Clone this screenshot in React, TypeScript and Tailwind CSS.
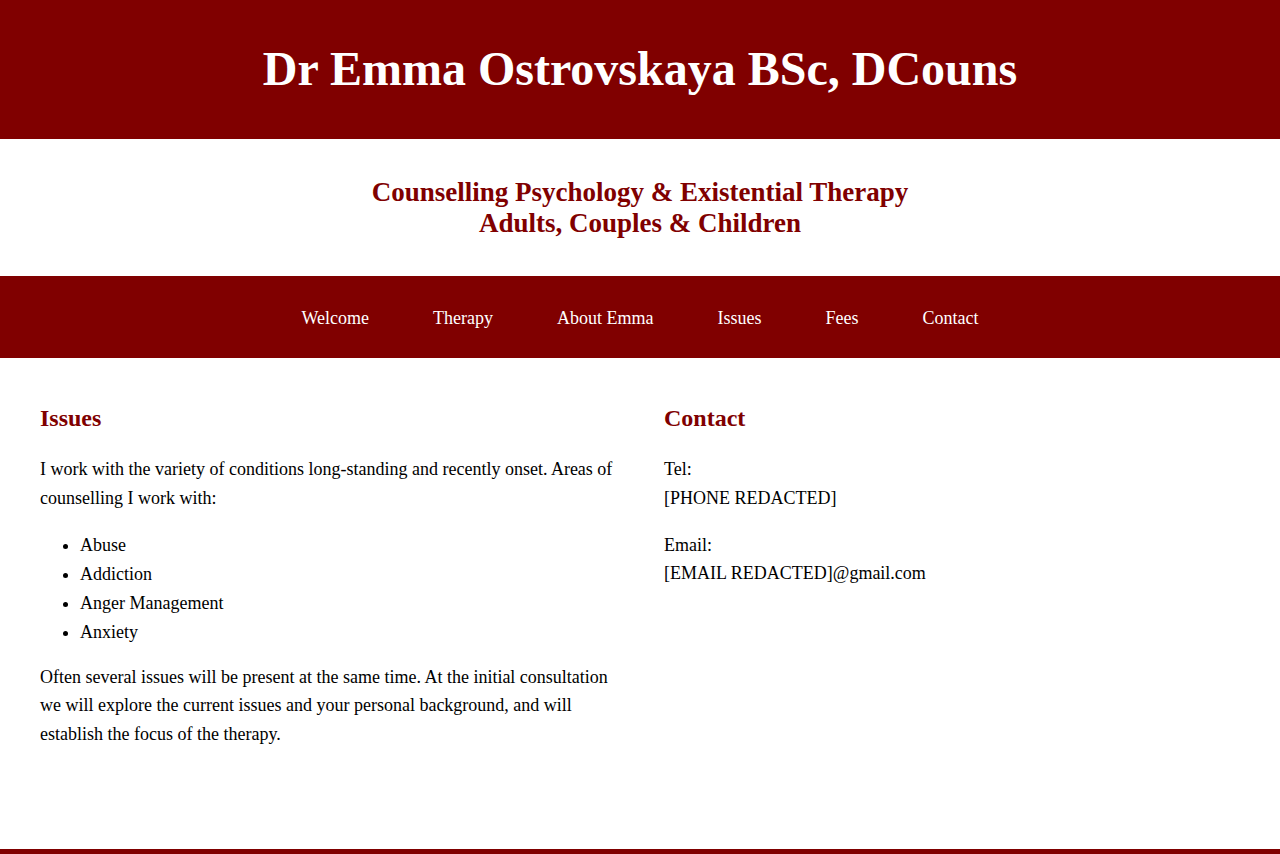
const links = ["Welcome", "Therapy", "About Emma", "Issues", "Fees", "Contact"];

const issues = ["Abuse", "Addiction", "Anger Management", "Anxiety"];

export default function App() {
  return (
    <div className="min-h-screen bg-white font-['Liberation_Serif','Times_New_Roman',serif] text-[18px] leading-[28.8px] text-black">
      <header className="flex h-[139px] items-center justify-center bg-[#800000]">
        <h1 className="pb-[2px] text-[48px] font-bold leading-[56px] text-white">
          Dr Emma Ostrovskaya BSc, DCouns
        </h1>
      </header>

      <section className="flex h-[137px] items-center justify-center text-center">
        <h2 className="text-[27px] font-bold leading-[31px] text-[#800000]">
          Counselling Psychology &amp; Existential Therapy
          <br />
          Adults, Couples &amp; Children
        </h2>
      </section>

      <nav className="flex h-[82px] items-center justify-center bg-[#800000] pt-[3px]">
        {links.map((l) => (
          <a key={l} href="#" className="px-8 text-white">
            {l}
          </a>
        ))}
      </nav>

      <main className="grid min-h-[491px] grid-cols-2 gap-12 px-10 pt-[42px]">
        <div>
          <h3 className="mb-[19px] text-[24px] font-bold leading-[36px] text-[#800000]">
            Issues
          </h3>
          <p>
            I work with the variety of conditions long-standing and recently
            onset. Areas of counselling I work with:
          </p>
          <ul className="mt-[18px] list-disc pl-10 leading-[29px]">
            {issues.map((i) => (
              <li key={i}>{i}</li>
            ))}
          </ul>
          <p className="mt-[16px]">
            Often several issues will be present at the same time. At the
            initial consultation we will explore the current issues and your
            personal background, and will establish the focus of the therapy.
          </p>
        </div>
        <div>
          <h3 className="mb-[19px] text-[24px] font-bold leading-[36px] text-[#800000]">
            Contact
          </h3>
          <p>
            Tel:
            <br />
            [PHONE REDACTED]
          </p>
          <p className="mt-[18px]">
            Email:
            <br />
            [EMAIL REDACTED]@gmail.com
          </p>
        </div>
      </main>

      <footer className="h-[20px] bg-[#800000]" />
    </div>
  );
}
